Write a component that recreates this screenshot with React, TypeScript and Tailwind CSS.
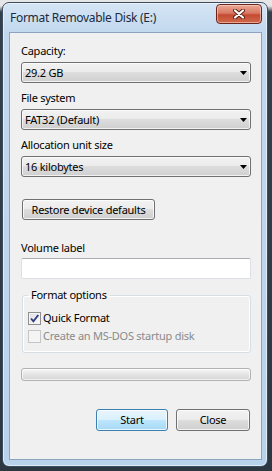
import type { ReactNode } from "react";

function Arrow() {
  return (
    <svg width="7" height="4" viewBox="0 0 7 4" className="block">
      <path d="M0 0h7L3.5 4z" fill="#000" />
    </svg>
  );
}

function Combo({ value }: { value: string }) {
  return (
    <div className="ml-[11px] flex h-[21px] w-[230px] items-center justify-between rounded-[3px] border border-[#707070] bg-[linear-gradient(to_bottom,#f2f2f2_0%,#ebebeb_50%,#dddddd_50%,#cfcfcf_100%)] pl-[3px] pr-[3px] shadow-[inset_0_0_0_1px_rgba(255,255,255,0.7)]">
      <span className="leading-[14px]">{value}</span>
      <Arrow />
    </div>
  );
}

function Label({ children, className = "" }: { children: ReactNode; className?: string }) {
  return <div className={`pl-[11px] leading-[14px] ${className}`}>{children}</div>;
}

function Button({ children, primary, className = "" }: { children: ReactNode; primary?: boolean; className?: string }) {
  return (
    <button
      type="button"
      className={`flex items-center justify-center rounded-[3px] border leading-[14px] shadow-[inset_0_0_0_1px_rgba(255,255,255,0.75)] ${
        primary
          ? "border-[#3c7fb1] bg-[linear-gradient(to_bottom,#eaf6fd_0%,#d9f0fc_50%,#bee6fd_50%,#a7d9f5_100%)]"
          : "border-[#707070] bg-[linear-gradient(to_bottom,#f2f2f2_0%,#ebebeb_50%,#dddddd_50%,#cfcfcf_100%)]"
      } ${className}`}
    >
      {children}
    </button>
  );
}

function Checkbox({ checked, disabled, label }: { checked?: boolean; disabled?: boolean; label: string }) {
  return (
    <div className="flex h-[18px] items-center gap-[2px]">
      <div
        className={`flex h-[13px] w-[13px] items-center justify-center border ${
          disabled
            ? "border-[#c6c6c6] bg-[#f4f4f4]"
            : "border-[#8e8f8f] bg-[linear-gradient(135deg,#dcdfe3,#fbfbfb)] shadow-[inset_0_0_0_1px_#f4f4f4]"
        }`}
      >
        {checked ? (
          <svg width="11" height="11" viewBox="0 0 11 11" className="block">
            <path d="M2 5.5l2.4 2.8L9.3 2" fill="none" stroke="#2f3f7a" strokeWidth="1.9" />
          </svg>
        ) : null}
      </div>
      <span className={`leading-[14px] ${disabled ? "text-[#8a8a8a]" : ""}`}>{label}</span>
    </div>
  );
}

function TitleBar() {
  return (
    <div className="flex h-[29px] items-start justify-between">
      <span className="ml-[7px] mt-[7px] text-[12px] leading-[16px] tracking-[-0.3px] text-[#1c2a3a]">Format Removable Disk (E:)</span>
      <div className="mr-[5px] mt-[1px] flex h-[20px] w-[46px] items-center justify-center rounded-[4px] border border-[#6b2418] bg-[linear-gradient(to_bottom,#e9a896_0%,#d97a64_45%,#c44a32_55%,#cf6a4e_100%)] shadow-[inset_0_0_0_1px_rgba(255,230,220,0.5)]">
        <svg width="12" height="10" viewBox="0 0 12 10" className="block">
          <path d="M2 1.5l8 7M10 1.5l-8 7" stroke="#5a1c12" strokeWidth="4" strokeLinecap="round" />
          <path d="M2 1.5l8 7M10 1.5l-8 7" stroke="#fff" strokeWidth="2.2" strokeLinecap="round" />
        </svg>
      </div>
    </div>
  );
}

export default function App() {
  return (
    <div className="h-[471px] w-[272px] overflow-hidden bg-[linear-gradient(to_bottom,#e6e6e6_0px,#e6e6e6_6px,#34414d_12px,#2c3742_100%)] pl-[2px] pt-[2px] font-['Noto_Sans',sans-serif] text-[11px] tracking-[-0.25px] text-black">
      <div className="flex h-[465px] w-[266px] flex-col rounded-[7px] border border-[#3b4d5e] bg-[linear-gradient(to_bottom,#d5e5f5,#c2d8ee_30px,#b9d2ec)] shadow-[inset_0_0_0_1px_rgba(255,255,255,0.55)]">
        <TitleBar />
        <div className="ml-[6px] flex h-[428px] w-[253px] flex-col border border-[#8ba5c0] bg-[#f0f0f0]">
          <Label className="mt-[11px]">Capacity:</Label>
          <div className="mt-[4px]">
            <Combo value="29.2 GB" />
          </div>
          <Label className="mt-[8px]">File system</Label>
          <div className="mt-[4px]">
            <Combo value="FAT32 (Default)" />
          </div>
          <Label className="mt-[8px]">Allocation unit size</Label>
          <div className="mt-[4px]">
            <Combo value="16 kilobytes" />
          </div>
          <div className="ml-[12px] mt-[22px]">
            <Button className="h-[21px] w-[133px]">Restore device defaults</Button>
          </div>
          <Label className="mt-[21px]">Volume label</Label>
          <div className="ml-[11px] mt-[3px] h-[21px] w-[230px] rounded-[2px] border border-[#dcdfe6] border-t-[#abadb3] bg-white" />
          <fieldset className="ml-[12px] mt-[9px] w-[229px] rounded-[3px] border border-[#d5dfe5] px-[5px] pb-[7px] pt-[7px] shadow-[inset_0_0_0_1px_#ffffff]">
            <legend className="px-[3px] leading-[14px]">Format options</legend>
            <Checkbox checked label="Quick Format" />
            <Checkbox disabled label="Create an MS-DOS startup disk" />
          </fieldset>
          <div className="ml-[11px] mt-[15px] h-[13px] w-[230px] rounded-[3px] border border-[#b2b2b2] bg-[linear-gradient(to_bottom,#f6f6f6,#e4e4e4_50%,#d6d6d6)] shadow-[inset_0_0_0_1px_rgba(255,255,255,0.6)]" />
          <div className="mt-[28px] flex justify-end gap-[8px] pr-[11px]">
            <Button primary className="h-[22px] w-[72px]">Start</Button>
            <Button className="h-[22px] w-[74px]">Close</Button>
          </div>
        </div>
      </div>
    </div>
  );
}
